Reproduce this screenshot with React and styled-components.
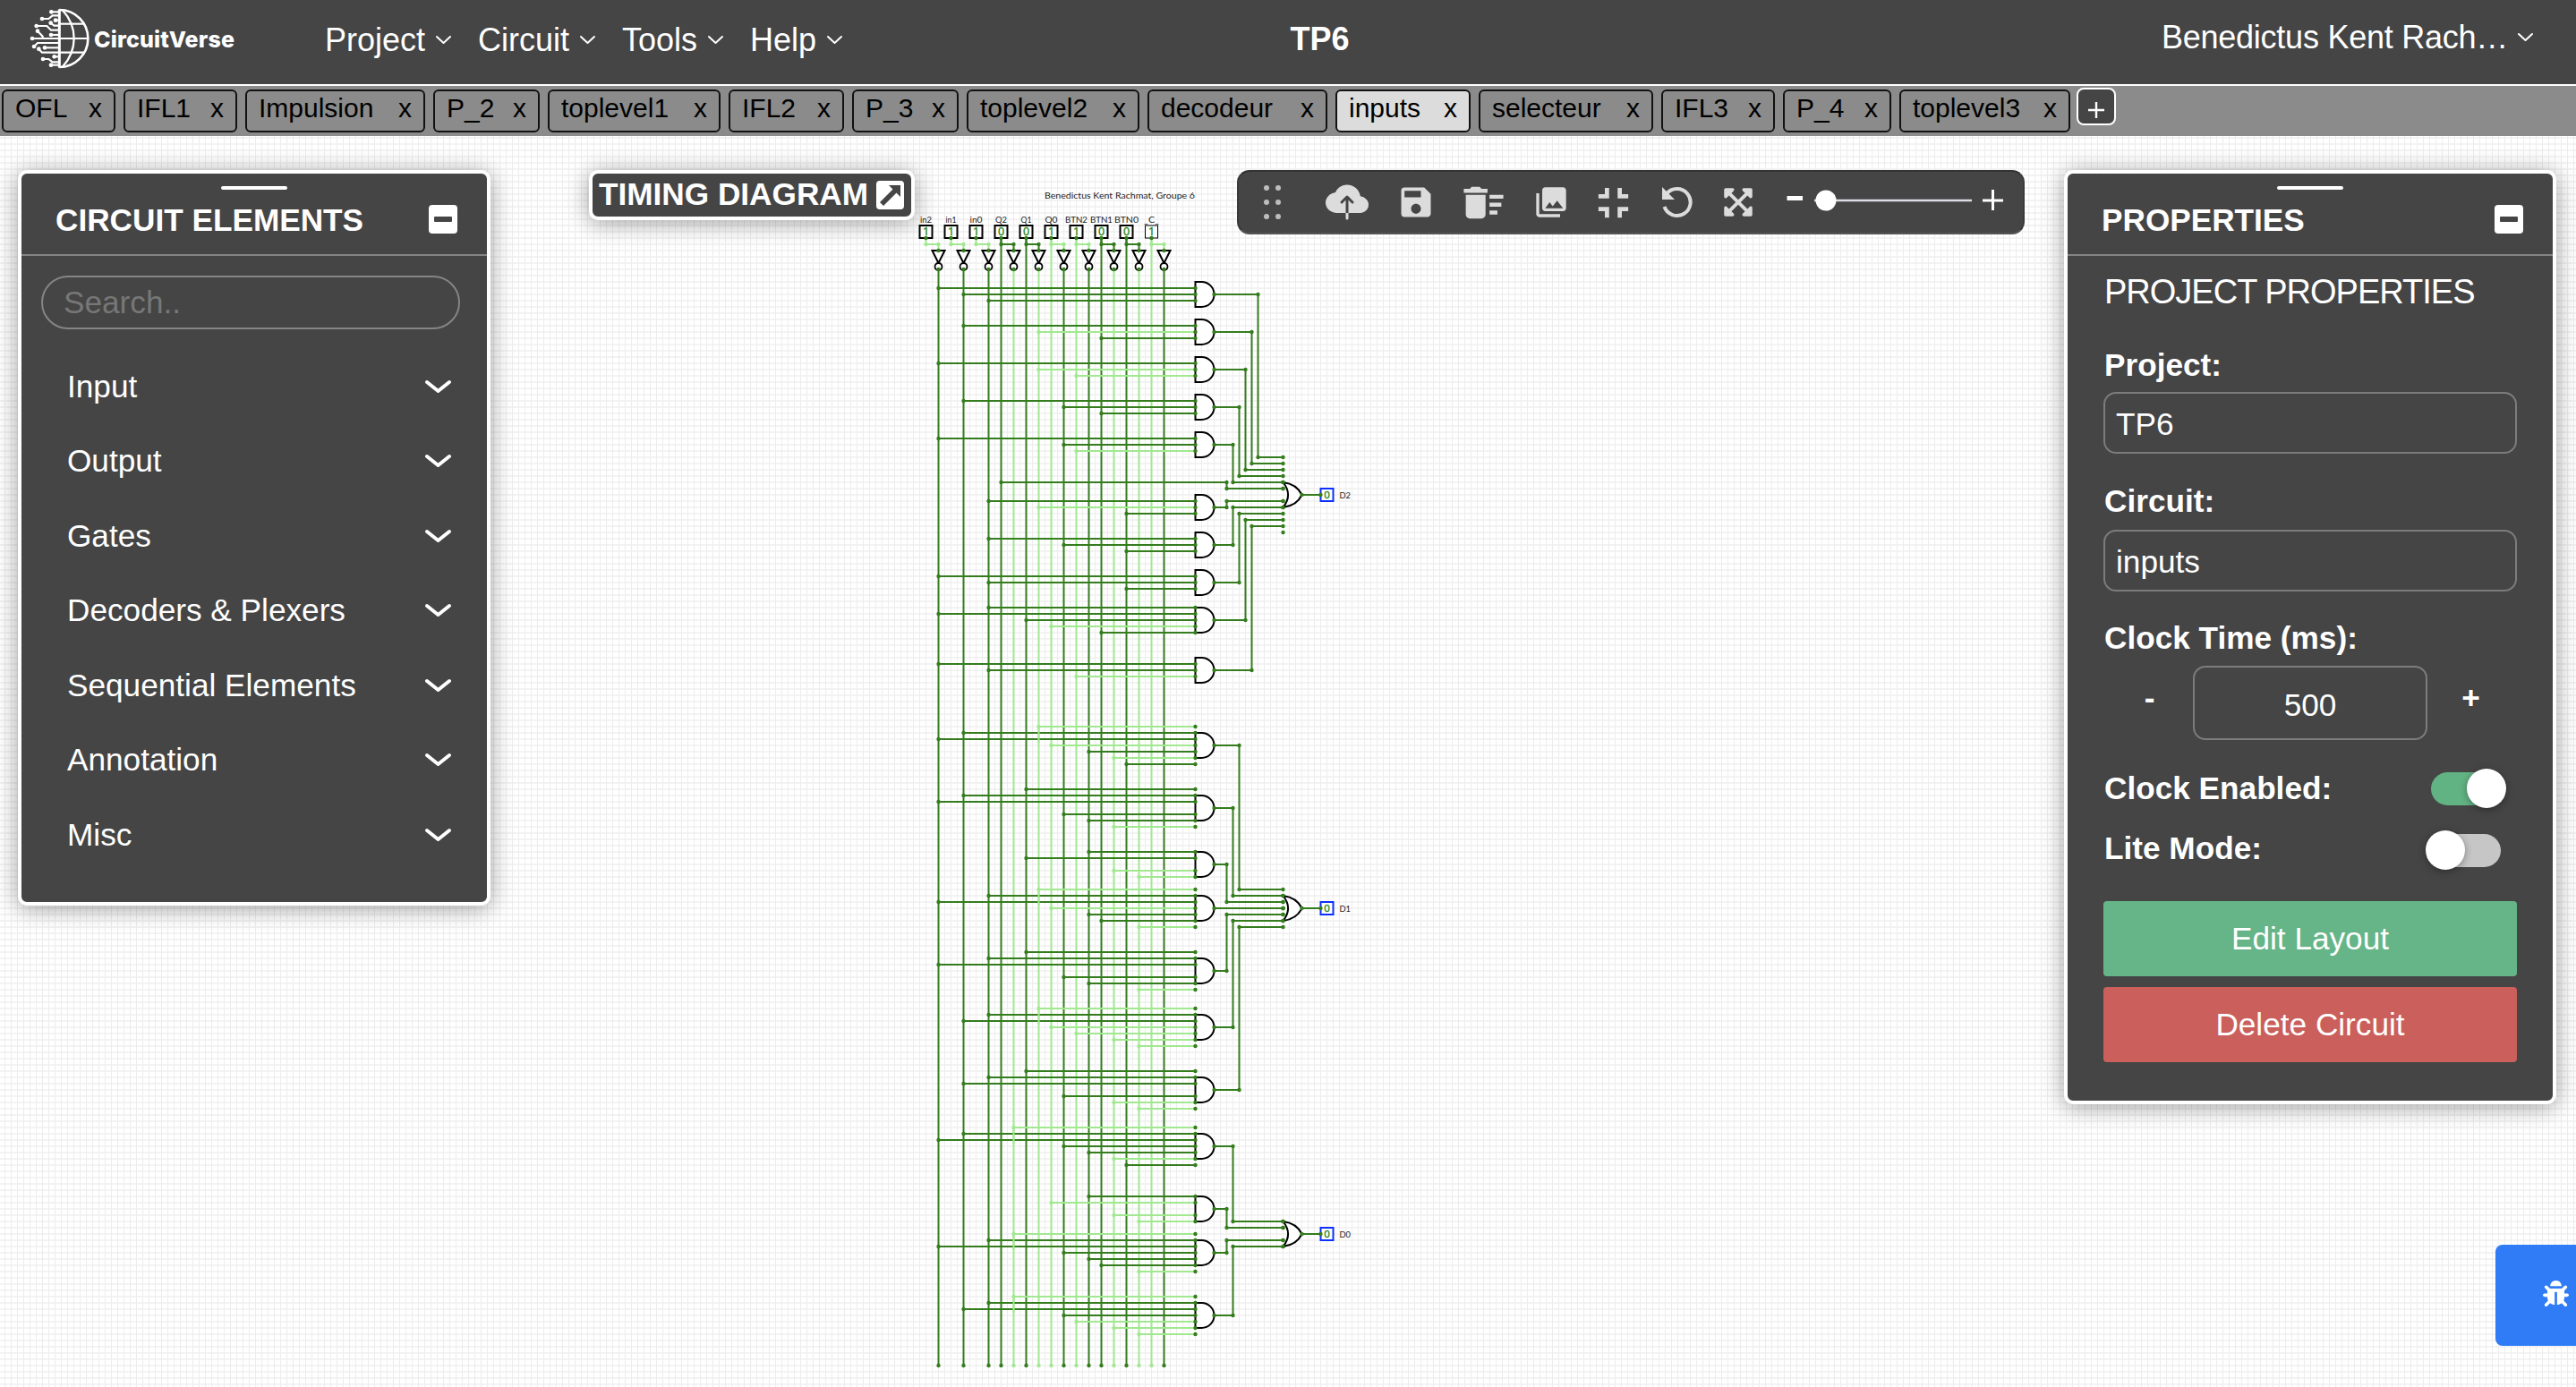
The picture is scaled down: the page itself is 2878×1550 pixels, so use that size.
import React from "react";
import styled, { createGlobalStyle, css } from "styled-components";
import { MdSave, MdDeleteSweep, MdPhotoLibrary, MdFullscreenExit } from "react-icons/md";
import { IoCloudUpload } from "react-icons/io5";
import { FaExpandArrowsAlt, FaBug } from "react-icons/fa";

const sans = `"Liberation Sans", Arial, sans-serif`;
const DARK = "#347c1e";
const LIGHT = "#a2e891";

const Global = createGlobalStyle`
  * { box-sizing: border-box; }
  body { margin: 0; background: #fff; font-family: ${sans}; overflow: hidden; }
`;

const Page = styled.div`
  width: 2878px;
  height: 1550px;
  display: flex;
  flex-direction: column;
`;

/* ---------- header ---------- */
const Header = styled.header`
  height: 96px;
  flex: none;
  display: grid;
  grid-template-columns: 365px 1fr 1fr;
  align-items: center;
  background: #454545;
  border-bottom: 2px solid #fff;
  color: #fff;
  font-size: 36px;
`;
const Brand = styled.div`
  display: flex;
  align-items: center;
  padding-left: 33px;
  height: 94px;
`;
const BrandName = styled.span`
  font-family: Inter, ${sans};
  font-weight: 800;
  font-size: 25px;
  line-height: 30px;
  margin-left: 5px;
  margin-top: -7px;
  letter-spacing: 0.15px;
`;
const Nav = styled.nav`
  display: flex;
  align-items: center;
  line-height: 44px;
  padding-bottom: 5px;
  margin-left: -2px;
`;
const NavItem = styled.div`
  display: flex;
  align-items: center;
  width: ${(p) => p.$w}px;
  gap: 12px;
`;
const HeaderRight = styled.div`
  display: flex;
  justify-content: space-between;
  align-items: center;
  margin-left: -180px;
  padding-right: 48px;
`;
const ProjectName = styled.div`
  font-weight: 700;
  padding-bottom: 7px;
  line-height: 44px;
`;
const User = styled.div`
  display: flex;
  align-items: center;
  gap: 11px;
  padding-bottom: 11px;
  line-height: 44px;
  letter-spacing: -0.25px;
`;

/* ---------- tabs ---------- */
const TabBar = styled.div`
  height: 56px;
  flex: none;
  display: flex;
  align-items: flex-start;
  gap: 9px;
  padding: 4px 2px;
  background: #8b8b8b;
`;
const Tab = styled.div`
  width: ${(p) => p.$w}px;
  height: 48px;
  flex: none;
  display: flex;
  justify-content: space-between;
  align-items: center;
  padding: 0 13px 6px 13px;
  border: 2px solid #111;
  border-radius: 6px;
  background: ${(p) => (p.$active ? "#dcdcdc" : "transparent")};
  font-size: 30px;
  line-height: 36px;
  color: #000;
`;
const AddTab = styled.div`
  width: 44px;
  height: 42px;
  margin: -2px 0 0 -2px;
  display: flex;
  align-items: center;
  justify-content: center;
  border: 2px solid #fff;
  border-radius: 8px;
  background: #454545;
  color: #fff;
`;

/* ---------- canvas ---------- */
const Canvas = styled.main`
  position: relative;
  flex: 1;
  overflow: hidden;
  background-color: #fff;
  background-image: linear-gradient(90deg, #ededed 1px, transparent 1px),
    linear-gradient(#f3f3f3 2px, transparent 2px);
  background-size: 7px 7px;
  background-position: 5px 0, 0 1px;
`;
const Drawing = styled.svg`
  display: block;
  width: 2878px;
  height: 1398px;
`;

const floating = css`
  position: absolute;
  top: 38px;
  background: #454545;
  color: #fff;
  border: 4px solid #fff;
  border-radius: 10px;
  box-shadow: 0 3px 26px rgba(0, 0, 0, 0.38);
`;
const Panel = styled.section`
  ${floating}
  left: ${(p) => p.$left}px;
  width: ${(p) => p.$w}px;
  height: ${(p) => p.$h}px;
  font-size: 35.2px;
  line-height: 40px;
`;
const Grip = styled.div`
  position: absolute;
  top: 14px;
  left: 50%;
  width: 74px;
  height: 4px;
  margin-left: -37px;
  border-radius: 2px;
  background: #fff;
`;
const PanelHeader = styled.div`
  height: 92px;
  display: flex;
  align-items: center;
  justify-content: space-between;
  padding: 13px 33px 0 38px;
  border-bottom: 2px solid #858585;
  font-weight: 700;
`;
const Minimize = styled.div`
  width: 32px;
  height: 32px;
  margin-bottom: 1px;
  display: flex;
  align-items: center;
  justify-content: center;
  border-radius: 4px;
  background: #fff;
  &::after {
    content: "";
    width: 20px;
    height: 6px;
    border-radius: 1px;
    background: #454545;
  }
`;
const Search = styled.div`
  margin: 22px 30px 22px 22px;
  height: 60px;
  display: flex;
  align-items: center;
  padding-left: 23px;
  border: 2px solid #858585;
  border-radius: 30px;
  color: #777;
`;
const Category = styled.div`
  height: 83.5px;
  display: flex;
  align-items: center;
  justify-content: space-between;
  padding: 0 41px 0 51px;
`;

const Body = styled.div`
  display: flex;
  flex-direction: column;
  padding: 0 40px;
`;
const Subtitle = styled.div`
  height: 82px;
  line-height: 80px;
  padding-left: 1px;
  font-size: 38px;
  letter-spacing: -1px;
  white-space: nowrap;
`;
const Label = styled.div`
  height: ${(p) => p.$h}px;
  padding-top: ${(p) => p.$pad}px;
  padding-left: 1px;
  display: flex;
  align-items: center;
  font-weight: 700;
`;
const Field = styled.div`
  height: 69px;
  display: flex;
  align-items: center;
  padding: 2px 0 0 12px;
  border: 2px solid #7c7c7c;
  border-radius: 14px;
`;
const ClockRow = styled.div`
  display: grid;
  grid-template-columns: 100px 262px 100px;
  height: 83px;
`;
const ClockField = styled(Field)`
  height: 83px;
  justify-content: center;
  padding: 4px 0 0;
`;
const Step = styled.div`
  display: flex;
  align-items: center;
  justify-content: center;
  font-weight: 700;
  padding: 0 ${(p) => p.$right}px 12px 3px;
`;
const SwitchRow = styled.div`
  height: ${(p) => p.$h}px;
  margin-top: ${(p) => p.$mt || 0}px;
  padding-left: 1px;
  display: flex;
  align-items: center;
  justify-content: space-between;
  font-weight: 700;
`;
const Track = styled.div`
  position: relative;
  width: 80px;
  height: 37px;
  margin-right: ${(p) => (p.$on ? 16 : 18)}px;
  margin-top: ${(p) => (p.$on ? 0 : 5)}px;
  border-radius: 19px;
  background: ${(p) => (p.$on ? "#62b384" : "#c6c6c6")};
`;
const Knob = styled.div`
  position: absolute;
  top: -4px;
  left: ${(p) => (p.$on ? 40 : -4)}px;
  width: 44px;
  height: 44px;
  border-radius: 50%;
  background: #fff;
  box-shadow: 0 2px 8px rgba(0, 0, 0, 0.35);
`;
const Action = styled.div`
  height: 84px;
  margin-top: ${(p) => p.$mt}px;
  display: flex;
  align-items: center;
  justify-content: center;
  border-radius: 4px;
  background: ${(p) => p.$bg};
`;

const Timing = styled.div`
  ${floating}
  left: 658px;
  width: 364px;
  height: 56px;
  display: flex;
  align-items: center;
  justify-content: space-between;
  padding: 0 8px 0 7px;
  font-size: 35.2px;
  font-weight: 700;
  white-space: nowrap;
  line-height: 40px;
`;
const TimingLabel = styled.span`
  margin-top: -2px;
`;

const Toolbar = styled.div`
  position: absolute;
  top: 38px;
  left: 1382px;
  width: 880px;
  height: 72px;
  display: flex;
  align-items: center;
  padding-left: 26px;
  border: 2px solid #3a3a3a;
  border-top-color: #333;
  border-bottom-color: #555;
  border-radius: 14px;
  background: #454545;
  color: #dcdcdc;
`;
const Tool = styled.div`
  width: ${(p) => p.$w}px;
  flex: none;
  display: flex;
  align-items: center;
  justify-content: center;
`;
const Handle = styled(Tool)`
  justify-content: flex-start;
`;
const Zoom = styled.svg`
  width: 250px;
  height: 30px;
  margin: 0 0 4px 20px;
`;
const Bug = styled.div`
  position: absolute;
  top: 1239px;
  right: 0;
  width: 90px;
  height: 113px;
  display: flex;
  align-items: center;
  justify-content: flex-end;
  padding: 0 8px 4px 0;
  border-radius: 8px 0 0 8px;
  background: #2f7cf6;
  color: #fff;
`;

/* ---------- icons ---------- */
const ChevronSvg = styled.svg`
  overflow: visible;
`;
const PlusSvg = styled.svg`
  margin-top: 8px;
`;
const Chevron = ({ w = 17, h = 9, sw = 2 }) => (
  <ChevronSvg width={w} height={h} viewBox={`0 0 ${w} ${h}`}>
    <path
      d={`M1 1L${w / 2} ${h - 1}L${w - 1} 1`}
      fill="none"
      stroke="#fff"
      strokeWidth={sw}
      strokeLinecap="round"
      strokeLinejoin="round"
    />
  </ChevronSvg>
);

const logoTraces = [
  "M113 40H140", "M82 63H104L117 52H140", "M63 87H98L112 101H140", "M127 68H140",
  "M111 77L122 86H140", "M112 117H140", "M67 104L84 122V129", "M49 129H236",
  "M55 156L67 144H140", "M71 164L82 176H222", "M91 160H140", "M85 198H104L117 208H140",
  "M123 190H140", "M112 218H140", "M140 80H220",
];
const logoNodes = [
  [113, 40], [82, 63], [63, 87], [127, 68], [111, 77], [112, 117], [67, 104], [49, 129],
  [55, 156], [71, 164], [91, 160], [85, 198], [123, 190], [112, 218],
];
const LogoSvg = styled.svg`
  margin-top: -8px;
`;
const Logo = () => (
  <LogoSvg width="67" height="68" viewBox="40 27 201 204" fill="none" stroke="#fff" strokeWidth="7">
    <path d="M140 31V227" strokeWidth="9" />
    <path d="M140 33A96 96 0 0 1 140 225" strokeWidth="8" />
    <path d="M150 33C202 90 202 168 150 225" />
    {logoTraces.map((d) => <path key={d} d={d} strokeWidth="6.5" />)}
    {logoNodes.map(([x, y]) => <circle key={`${x}-${y}`} cx={x} cy={y} r="7" fill="#fff" stroke="none" />)}
  </LogoSvg>
);

/* ---------- circuit ---------- */
const X = (k) => 1048.5 + 7 * k;
const columns = [
  [0, 0], [4, 0], [8, 0], [10, 0], [12, 1], [14, 0], [16, 1], [18, 1], [20, 0], [22, 1],
  [24, 0], [26, 0], [28, 1], [30, 0], [32, 1], [34, 1], [36, 0],
];
const level = Object.fromEntries(columns);
const color = (k) => (level[k] ? LIGHT : DARK);
const direct = [10, 14, 18, 22, 26, 30, 34];

const inputs = [
  ["in2", 1], ["in1", 1], ["in0", 1], ["Q2", 0], ["Q1", 0], ["Q0", 1],
  ["BTN2", 1], ["BTN1", 0], ["BTN0", 0], ["_C_", 1],
];
const labelWidth = [13, 12, 14, 13, 12, 14, 25, 25, 27, 17];

// y centre, [row offset, column] taps, output column, output row
const gates = [
  [329, [[-1, 0], [0, 4], [1, 8]], 51, 511],
  [371, [[-1, 4], [0, 16], [1, 26]], 50, 518],
  [413, [[-1, 0], [0, 16], [1, 22]], 49, 525],
  [455, [[-1, 4], [0, 20], [1, 26]], 48, 532],
  [497, [[-1, 0], [0, 20], [1, 22]], 47, 539],
  [567, [[-1, 8], [0, 16], [1, 30]], 46, 560],
  [609, [[-1, 8], [0, 20], [1, 30]], 47, 567],
  [651, [[-1, 0], [0, 8], [1, 30]], 48, 574],
  [693, [[-2, 8], [-1, 0], [0, 14], [1, 18], [2, 26]], 49, 581],
  [749, [[-1, 0], [0, 8], [1, 22]], 50, 588],
  [833, [[-3, 16], [-2, 4], [-1, 0], [0, 18], [1, 24], [2, 28], [3, 30]], 48, 994],
  [903, [[-3, 14], [-2, 4], [-1, 0], [1, 20], [2, 24], [3, 28]], 47, 1001],
  [966, [[-2, 24], [-1, 14], [1, 28], [2, 32]], 46, 1008],
  [1015, [[-3, 16], [-2, 8], [-1, 0], [0, 18], [1, 24], [2, 26], [3, 32]], 55, 1015],
  [1085, [[-3, 14], [-2, 8], [-1, 0], [1, 20], [2, 24], [3, 32]], 46, 1022],
  [1148, [[-3, 16], [-2, 8], [-1, 4], [0, 18], [1, 22], [2, 28], [3, 32]], 47, 1029],
  [1218, [[-3, 14], [-2, 8], [-1, 4], [1, 20], [2, 28], [3, 32]], 48, 1036],
  [1281, [[-3, 12], [-2, 4], [-1, 0], [0, 20], [1, 24], [2, 28], [3, 30]], 47, 1365],
  [1351, [[-2, 24], [-1, 18], [1, 28], [2, 32]], 46, 1372],
  [1400, [[-3, 12], [-2, 8], [-1, 0], [0, 20], [1, 24], [2, 26], [3, 32]], 46, 1386],
  [1470, [[-3, 12], [-2, 8], [-1, 4], [0, 20], [1, 22], [2, 28], [3, 32]], 47, 1393],
];
const outputs = [[553, "D2"], [1015, "D1"], [1379, "D0"]];
const tapOverlays = [[16, 812], [16, 994], [16, 1127], [12, 1260], [12, 1379], [12, 1449]];

const Wire = ({ d, c = DARK, w = 2 }) => <path d={d} stroke={c} strokeWidth={w} fill="none" />;
const Dot = ({ x, y, c = DARK }) => <circle cx={x} cy={y} r="2.2" fill={c} />;

const Circuit = () => (
  <Drawing viewBox="0 152 2878 1398">
    {columns.map(([k]) => (
      <Wire key={k} d={`M${X(k)} ${direct.includes(k) ? 266 : 301}V1526`} c={color(k)} />
    ))}
    {columns.map(([k]) => <Dot key={k} x={X(k)} y={1526} c={color(k)} />)}
    {gates.map(([y, taps, ok, oy]) => (
      <g key={y}>
        {taps.map(([o, k]) => (
          <g key={o}>
            <Wire d={`M${X(k)} ${y + o * 7}H${X(41)}`} c={color(k)} />
            <Dot x={X(k)} y={y + o * 7} c={color(k)} />
          </g>
        ))}
        <Wire d={`M${X(44)} ${y}H${X(ok)}V${oy}H${X(55)}`} />
        <Dot x={X(ok)} y={y} />
        <Dot x={X(ok)} y={oy} />
        <Dot x={X(55)} y={oy} />
      </g>
    ))}
    <Wire d={`M${X(10)} 539H${X(46)}V546H${X(55)}`} />
    {[[10, 539], [46, 539], [46, 546], [55, 546], [55, 595]].map(([k, y]) => (
      <Dot key={`${k}-${y}`} x={X(k)} y={y} />
    ))}
    {tapOverlays.map(([k, y]) => <Wire key={`${k}-${y}`} d={`M${X(k)} ${y}v18`} c={LIGHT} />)}

    {gates.map(([y, taps]) => (
      <g key={y}>
        <path d={`M${X(41)} ${y - 14}h7a14 14 0 0 1 0 28h-7z`} fill="#fff" stroke="#000" strokeWidth="2" />
        {taps.map(([o]) => <Dot key={o} x={X(41)} y={y + o * 7} />)}
        <Dot x={X(44)} y={y} />
      </g>
    ))}

    {inputs.map(([name, v], i) => {
      const x = X(4 * i - 2);
      const c = v ? LIGHT : DARK;
      return (
        <g key={name}>
          <Wire d={`M${x} 266V273H${x + 14}V280`} c={c} />
          <Dot x={x} y={273} c={c} />
          <Dot x={x + 14} y={273} c={c} />
          <path d={`M${x + 7} 280h14l-7 14z`} fill="#fff" stroke="#000" strokeWidth="2" />
          <circle cx={x + 14} cy={298} r="4" fill="#fff" stroke="#000" strokeWidth="1.8" />
          <Dot x={x + 14} y={280} />
          <Dot x={x + 14} y={301} />
          <rect x={x - 7} y={252} width="14" height="14" fill="#fff" stroke="#000" strokeWidth={i === 9 ? 1 : 2} />
          <text x={x} y={263.2} textAnchor="middle" fontSize="12.5" fontFamily='"Noto Sans", sans-serif' fill="#1f8410" stroke="#1f8410" strokeWidth="0.3">{v}</text>
          <Dot x={x} y={266} />
          <text
            x={x - labelWidth[i] / 2}
            y={248.5}
            textLength={labelWidth[i]}
            lengthAdjust="spacingAndGlyphs"
            fontSize="10"
            fontFamily="Lato, sans-serif"
            fill="#222"
          >
            {name}
          </text>
        </g>
      );
    })}
    <text x="1167" y="221.5" textLength="168" lengthAdjust="spacingAndGlyphs" fontSize="10.4" fontFamily="Lato, sans-serif" fill="#222">
      Benedictus Kent Rachmat, Groupe 6
    </text>

    {outputs.map(([y, name]) => (
      <g key={name}>
        <path
          d={`M${X(55)} ${y - 14}Q${X(57.2)} ${y - 12} ${X(58)} ${y}Q${X(57.2)} ${y + 12} ${X(55)} ${y + 14}Q${X(56.6)} ${y} ${X(55)} ${y - 14}z`}
          fill="#fff"
          stroke="#000"
          strokeWidth="2"
        />
        <Wire d={`M${X(58)} ${y}H${X(61)}`} />
        <rect x={X(62) - 7} y={y - 7} width="14" height="14" fill="#fff" stroke="#0a2fff" strokeWidth="2" />
        <text x={X(62)} y={y + 4} textAnchor="middle" fontSize="11.5" fontFamily='"Noto Sans", sans-serif' fill="#1f8410" stroke="#1f8410" strokeWidth="0.3">0</text>
        <Dot x={X(58)} y={y} />
        <Dot x={X(61)} y={y} />
        {[-14, -7, 7, 14].map((o) => <Dot key={o} x={X(55)} y={y + o} />)}
        <text x="1496.5" y={y + 3.8} textLength="12.5" lengthAdjust="spacingAndGlyphs" fontSize="9.6" fontFamily="Lato, sans-serif" fill="#222">{name}</text>
      </g>
    ))}
  </Drawing>
);

const menus = [["Project", 171], ["Circuit", 161], ["Tools", 143], ["Help", 110]];
const tabs = [
  ["OFL", 127], ["IFL1", 127], ["Impulsion", 201], ["P_2", 119], ["toplevel1", 193], ["IFL2", 129],
  ["P_3", 119], ["toplevel2", 193], ["decodeur", 201], ["inputs", 151], ["selecteur", 195],
  ["IFL3", 127], ["P_4", 121], ["toplevel3", 191],
];
const categories = [
  "Input", "Output", "Gates", "Decoders & Plexers", "Sequential Elements", "Annotation", "Misc",
];

export default function App() {
  return (
    <Page>
      <Global />
      <Header>
        <Brand>
          <Logo />
          <BrandName>CircuitVerse</BrandName>
        </Brand>
        <Nav>
          {menus.map(([m, w]) => (
            <NavItem key={m} $w={w}>{m}<Chevron /></NavItem>
          ))}
        </Nav>
        <HeaderRight>
          <ProjectName>TP6</ProjectName>
          <User>Benedictus Kent Rach…<Chevron /></User>
        </HeaderRight>
      </Header>

      <TabBar>
        {tabs.map(([t, w]) => (
          <Tab key={t} $w={w} $active={t === "inputs"}><span>{t}</span><span>x</span></Tab>
        ))}
        <AddTab>
          <PlusSvg width="20" height="20" viewBox="0 0 20 20">
            <path d="M10 1V19M1 10H19" stroke="#fff" strokeWidth="2.4" />
          </PlusSvg>
        </AddTab>
      </TabBar>

      <Canvas>
        <Circuit />

        <Panel $left={20} $w={528} $h={822}>
          <Grip />
          <PanelHeader>CIRCUIT ELEMENTS<Minimize /></PanelHeader>
          <Search>Search..</Search>
          {categories.map((c) => (
            <Category key={c}>{c}<Chevron w={27} h={12} sw={4} /></Category>
          ))}
        </Panel>

        <Timing>
          <TimingLabel>TIMING DIAGRAM</TimingLabel>
          <svg width="31" height="32" viewBox="0 0 31 32">
            <rect width="31" height="32" rx="4" fill="#fff" />
            <path d="M14 5H27V18L22.500 13.500L8 28L4 24L18.500 9.500Z" fill="#454545" />
          </svg>
        </Timing>

        <Toolbar>
          <Handle $w={57}>
            <svg width="24" height="44" viewBox="0 0 24 44" fill="#bdbdbd">
              {[5, 18].map((x) => [6, 22, 38].map((y) => <circle key={`${x}-${y}`} cx={x} cy={y} r="3" />))}
            </svg>
          </Handle>
          <Tool $w={76}><IoCloudUpload size={48} /></Tool>
          <Tool $w={77}><MdSave size={44} /></Tool>
          <Tool $w={74}><MdDeleteSweep size={53} /></Tool>
          <Tool $w={77}><MdPhotoLibrary size={40} /></Tool>
          <Tool $w={63}><MdFullscreenExit size={57} /></Tool>
          <Tool $w={80}>
            <svg width="36" height="36" viewBox="0 0 36 36">
              <path d="M6 8.500A15 15 0 1 1 3.500 23" fill="none" stroke="#dcdcdc" strokeWidth="4" />
              <path d="M1 1V15H15Z" fill="#dcdcdc" />
            </svg>
          </Tool>
          <Tool $w={56}><FaExpandArrowsAlt size={36} /></Tool>
          <Zoom viewBox="1989 208 250 30">
            <path d="M1995.500 220.500H2013" stroke="#fff" strokeWidth="5" />
            <path d="M2026 223H2202" stroke="#dcdce6" strokeWidth="2.500" />
            <circle cx="2039" cy="223" r="11.500" fill="#fff" />
            <path d="M2214 223H2237M2225.500 211V234" stroke="#fff" strokeWidth="3" />
          </Zoom>
        </Toolbar>

        <Panel $left={2306} $w={550} $h={1044}>
          <Grip />
          <PanelHeader>PROPERTIES<Minimize /></PanelHeader>
          <Body>
            <Subtitle>PROJECT PROPERTIES</Subtitle>
            <Label $h={70} $pad={9}>Project:</Label>
            <Field>TP6</Field>
            <Label $h={85} $pad={20}>Circuit:</Label>
            <Field>inputs</Field>
            <Label $h={83} $pad={21}>Clock Time (ms):</Label>
            <ClockRow>
              <Step $right={0}>-</Step>
              <ClockField>500</ClockField>
              <Step $right={6}>+</Step>
            </ClockRow>
            <SwitchRow $h={68} $mt={20}>Clock Enabled:<Track $on><Knob $on /></Track></SwitchRow>
            <SwitchRow $h={66}>Lite Mode:<Track><Knob /></Track></SwitchRow>
            <Action $mt={26} $bg="#66b588">Edit Layout</Action>
            <Action $mt={12} $bg="#ca5f5b">Delete Circuit</Action>
          </Body>
        </Panel>

        <Bug><FaBug size={29} /></Bug>
      </Canvas>
    </Page>
  );
}
